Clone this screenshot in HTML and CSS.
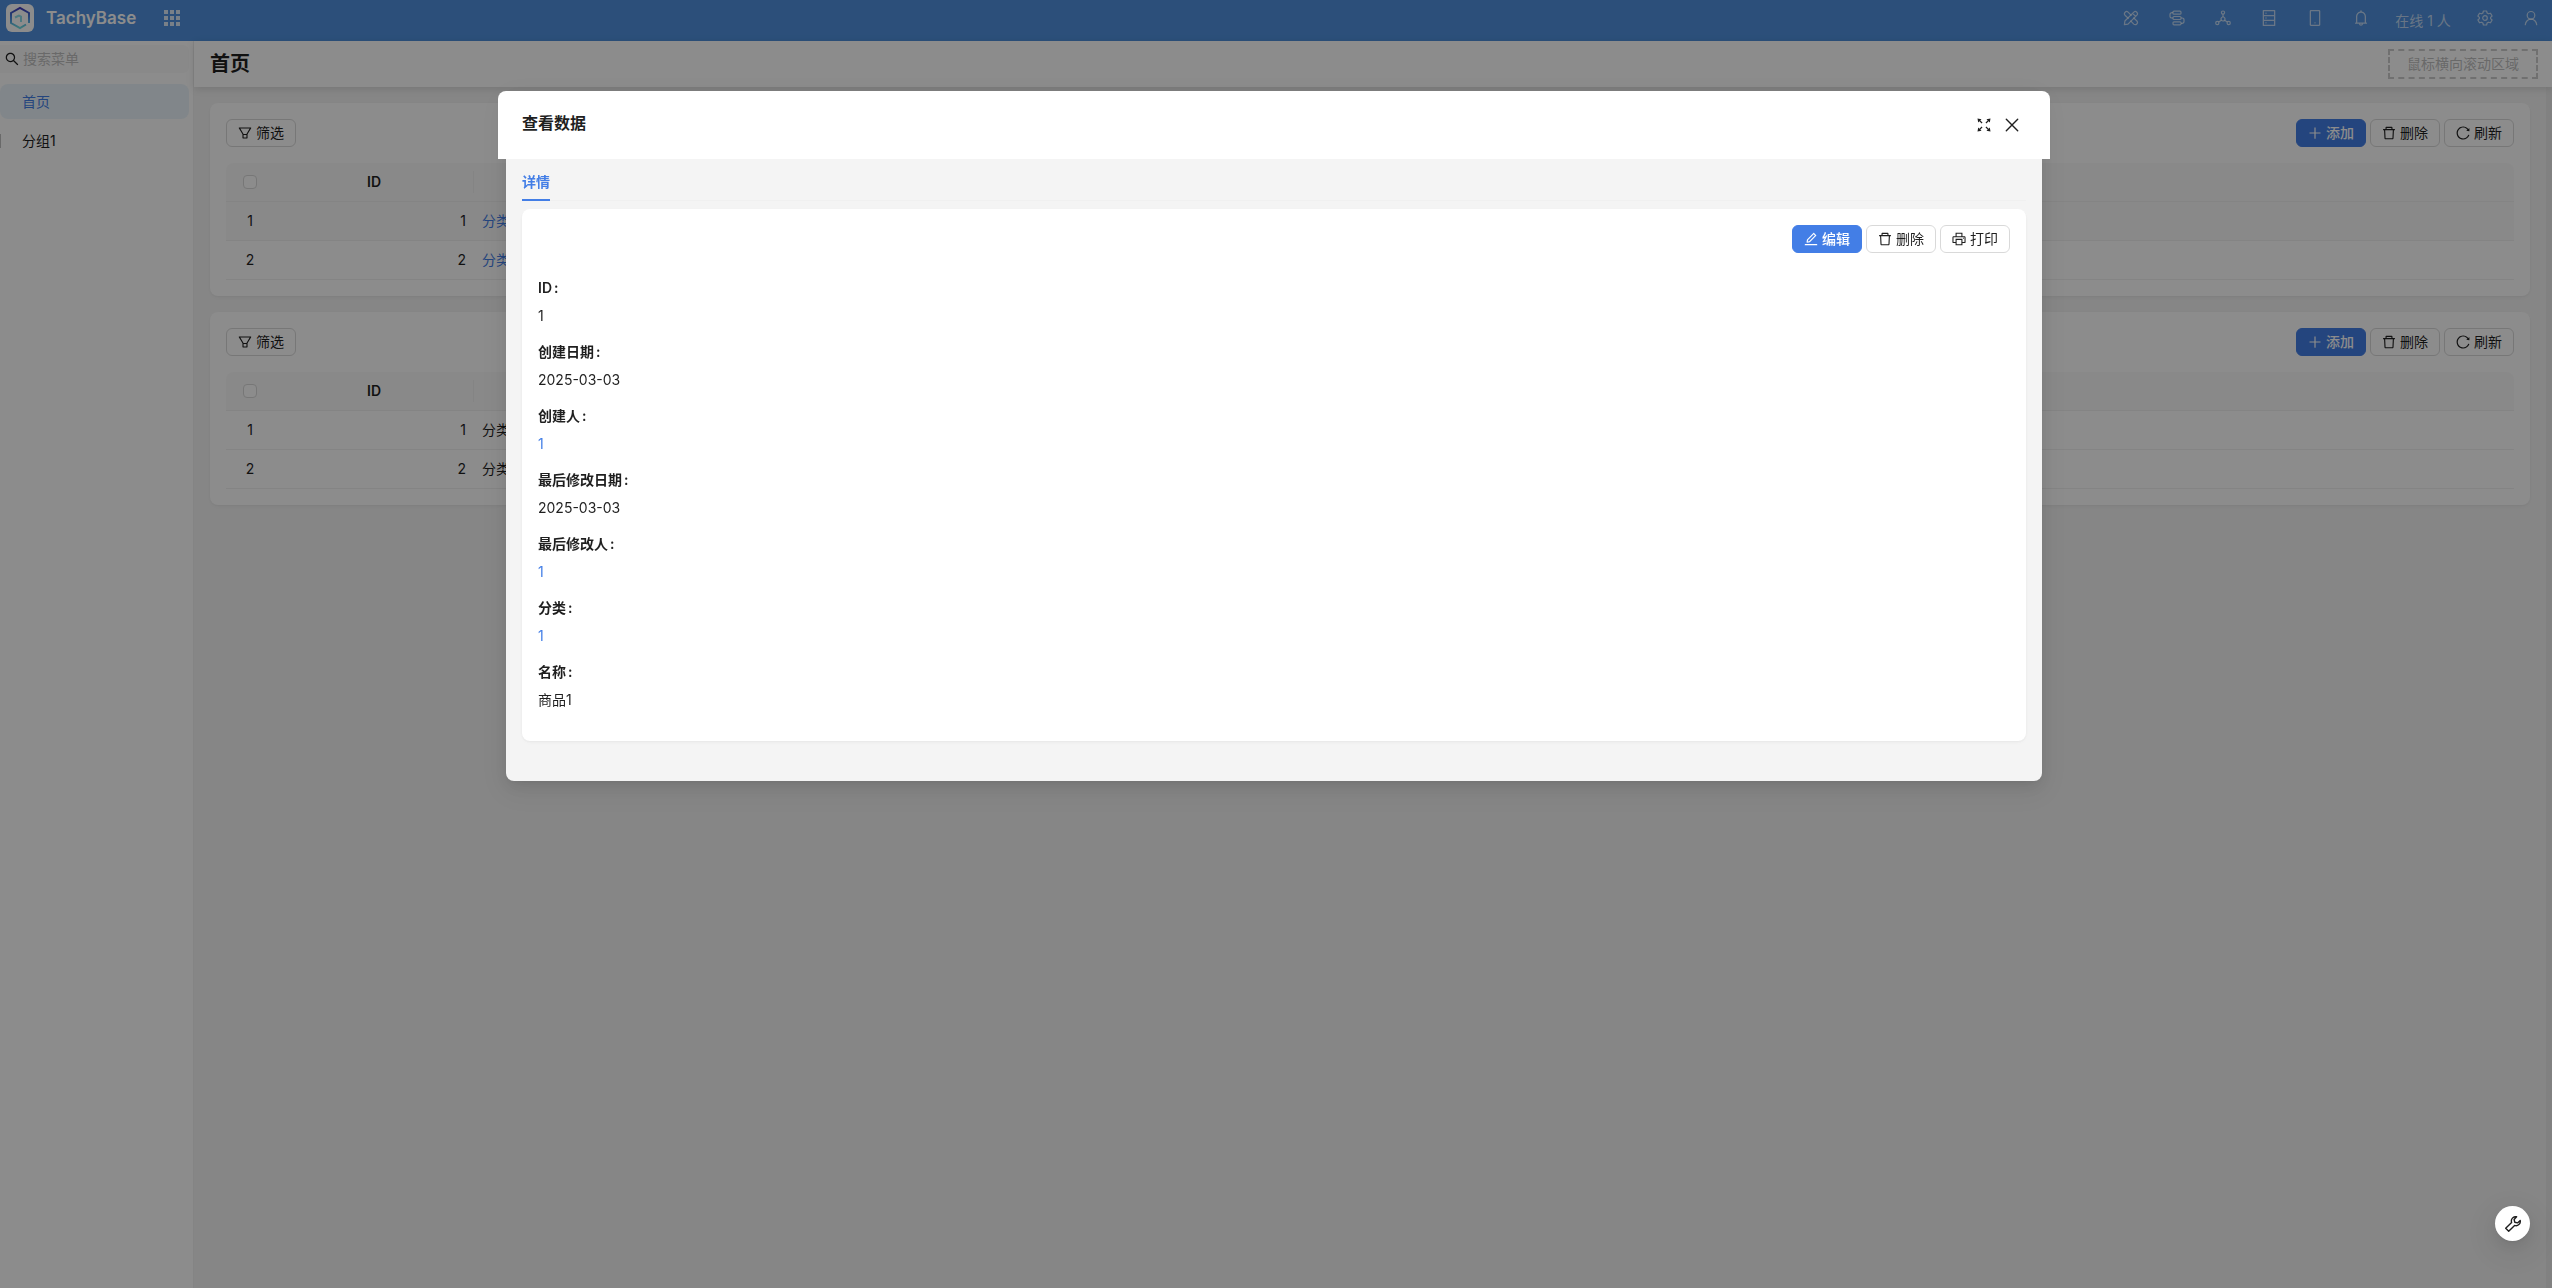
FILE: index.html
```html
<!DOCTYPE html>
<html lang="zh-CN">
<head>
    <meta charset="UTF-8">
    <meta name="viewport" content="width=device-width, initial-scale=1.0">
    <title>TachyBase - 首页</title>
    <link rel="stylesheet" href="styles.css">
</head>
<body>
    <!-- Icônes partagées -->
    <svg class="sprite" aria-hidden="true">
        <symbol id="i-plus" viewBox="64 64 896 896"><path d="M482 152h60q8 0 8 8v704q0 8-8 8h-60q-8 0-8-8V160q0-8 8-8z"/><path d="M168 474h688q8 0 8 8v60q0 8-8 8H168q-8 0-8-8v-60q0-8 8-8z"/></symbol>
        <symbol id="i-delete" viewBox="64 64 896 896"><path d="M360 184h-8c4.4 0 8-3.6 8-8v8h304v-8c0 4.4 3.6 8 8 8h-8v72h72v-80c0-35.3-28.7-64-64-64H352c-35.3 0-64 28.7-64 64v80h72v-72zm504 72H160c-17.7 0-32 14.3-32 32v32c0 4.4 3.6 8 8 8h60.4l24.7 523c1.6 34.1 29.8 61 63.9 61h454c34.2 0 62.3-26.8 63.9-61l24.7-523H888c4.4 0 8-3.6 8-8v-32c0-17.7-14.3-32-32-32zM731.3 840H292.7l-24.2-512h487l-24.2 512z"/></symbol>
        <symbol id="i-filter" viewBox="64 64 896 896"><path d="M880.1 154H143.9c-24.5 0-39.8 26.7-27.5 48L349 597.4V838c0 17.7 14.2 32 31.8 32h262.4c17.6 0 31.8-14.3 31.8-32V597.4L907.7 202c12.2-21.3-3.1-48-27.6-48zM603.4 798H420.6V642h182.9v156zm9.6-236.6l-9.5 16.6h-183l-9.5-16.6L212.7 226h598.6L613 561.4z"/></symbol>
        <symbol id="i-reload" viewBox="64 64 896 896"><path d="M909.1 209.3l-56.4 44.1C775.8 155.1 656.2 92 521.9 92 290 92 102.3 279.5 102 511.5 101.7 743.7 289.8 932 521.9 932c181.3 0 335.8-115 394.6-276.1 1.5-4.2-.7-8.9-4.9-10.3l-56.7-19.5a8 8 0 00-10.1 4.8c-1.8 5-3.8 10-5.9 14.9-17.3 41-42.1 77.8-73.7 109.4A344.77 344.77 0 01655.9 829c-42.3 17.9-87.4 27-133.8 27-46.5 0-91.5-9.1-133.8-27A341.5 341.5 0 01279 755.2a342.16 342.16 0 01-73.7-109.4c-17.9-42.4-27-87.4-27-133.9s9.1-91.5 27-133.9c17.3-41 42.1-77.8 73.7-109.4 31.6-31.6 68.4-56.4 109.3-73.8 42.3-17.9 87.4-27 133.8-27 46.5 0 91.5 9.1 133.8 27a341.5 341.5 0 01109.3 73.8c9.9 9.9 19.2 20.4 27.8 31.4l-60.2 47a8 8 0 003 14.1l175.6 43c5 1.2 9.9-2.6 9.9-7.7l.8-180.9c-.1-6.6-7.8-10.3-13-6.2z"/></symbol>
        <symbol id="i-edit" viewBox="64 64 896 896"><path d="M257.7 752c2 0 4-.2 6-.5L431.9 722c2-.4 3.9-1.3 5.3-2.8l423.9-423.9a9.96 9.96 0 000-14.1L694.9 114.9c-1.9-1.9-4.4-2.9-7.1-2.9s-5.2 1-7.1 2.9L256.8 538.8c-1.5 1.5-2.4 3.3-2.8 5.3l-29.5 168.2a33.5 33.5 0 009.4 29.8c6.6 6.4 14.9 9.9 23.8 9.9zm67.4-174.4L687.8 215l73.3 73.3-362.7 362.6-88.9 15.7 15.6-89zM880 836H144c-17.7 0-32 14.3-32 32v36c0 4.4 3.6 8 8 8h784c4.4 0 8-3.6 8-8v-36c0-17.7-14.3-32-32-32z"/></symbol>
        <symbol id="i-printer" viewBox="64 64 896 896"><path d="M820 436h-40c-4.4 0-8 3.6-8 8v40c0 4.4 3.6 8 8 8h40c4.4 0 8-3.6 8-8v-40c0-4.4-3.6-8-8-8zm32-104H732V120c0-4.4-3.6-8-8-8H300c-4.4 0-8 3.6-8 8v212H172c-44.2 0-80 35.8-80 80v328c0 17.7 14.3 32 32 32h168v132c0 4.4 3.6 8 8 8h424c4.4 0 8-3.6 8-8V772h168c17.7 0 32-14.3 32-32V412c0-44.2-35.8-80-80-80zM360 180h304v152H360V180zm304 664H360V568h304v276zm200-140H732V500H292v204H160V412c0-6.6 5.4-12 12-12h680c6.6 0 12 5.4 12 12v292z"/></symbol>
        <symbol id="i-search" viewBox="64 64 896 896"><path d="M909.6 854.5L649.9 594.8C690.2 542.7 712 479 712 412c0-80.2-31.3-155.4-87.9-212.1-56.6-56.7-132-87.9-212.1-87.9s-155.5 31.3-212.1 87.9C143.2 256.5 112 331.8 112 412c0 80.1 31.3 155.5 87.9 212.1C256.5 680.8 331.8 712 412 712c67 0 130.6-21.8 182.7-62l259.7 259.6a8.2 8.2 0 0011.6 0l43.6-43.5a8.2 8.2 0 000-11.6zM570.4 570.4C528 612.7 471.8 636 412 636s-116-23.3-158.4-65.6C211.3 528 188 471.8 188 412s23.3-116.1 65.6-158.4C296 211.3 352.2 188 412 188s116.1 23.2 158.4 65.6S636 352.2 636 412s-23.3 116.1-65.6 158.4z"/></symbol>
        <symbol id="i-bell" viewBox="64 64 896 896"><path d="M816 768h-24V428c0-141.1-104.3-257.7-240-277.1V112c0-22.1-17.9-40-40-40s-40 17.9-40 40v38.9c-135.7 19.4-240 136-240 277.1v340h-24c-17.7 0-32 14.3-32 32v32c0 4.4 3.6 8 8 8h216c0 61.8 50.2 112 112 112s112-50.2 112-112h216c4.4 0 8-3.6 8-8v-32c0-17.7-14.3-32-32-32zM512 888c-26.5 0-48-21.5-48-48h96c0 26.5-21.5 48-48 48zM304 768V428c0-55.6 21.6-107.8 60.9-147.1S456.4 220 512 220c55.6 0 107.8 21.6 147.1 60.9S720 372.4 720 428v340H304z"/></symbol>
        <symbol id="i-mobile" viewBox="64 64 896 896"><path d="M744 62H280c-35.3 0-64 28.7-64 64v768c0 35.3 28.7 64 64 64h464c35.3 0 64-28.7 64-64V126c0-35.3-28.7-64-64-64zm-8 824H288V134h448v752zM472 784a40 40 0 1080 0 40 40 0 10-80 0z"/></symbol>
        <symbol id="i-database" viewBox="64 64 896 896"><path d="M832 64H192c-17.7 0-32 14.3-32 32v832c0 17.7 14.3 32 32 32h640c17.7 0 32-14.3 32-32V96c0-17.7-14.3-32-32-32zm-600 72h560v208H232V136zm560 480H232V408h560v208zm0 272H232V680h560v208zM304 240a40 40 0 1080 0 40 40 0 10-80 0zm0 272a40 40 0 1080 0 40 40 0 10-80 0zm0 272a40 40 0 1080 0 40 40 0 10-80 0z"/></symbol>
        <symbol id="i-apps" viewBox="0 0 16 16"><path d="M0 0h4v4H0zM6 0h4v4H6zM12 0h4v4h-4zM0 6h4v4H0zM6 6h4v4H6zM12 6h4v4h-4zM0 12h4v4H0zM6 12h4v4H6zM12 12h4v4h-4z"/></symbol>
        <symbol id="i-design" viewBox="0 0 16 16"><g fill="none" stroke="currentColor" stroke-width="1.2" stroke-linejoin="round"><path d="M5.6 8.6L2 5.2a2.2 2.2 0 013.1-3.1l3.4 3.5M10.4 7.6l3.5 3.4a2.2 2.2 0 01-3.1 3.1l-3.4-3.5"/><path d="M1.4 14.6l.5-3.6 8.9-8.9a2.2 2.2 0 013.1 3.1L5 14.1zM9.6 3.4l3 3"/></g></symbol>
        <symbol id="i-flow" viewBox="0 0 16 16"><g fill="none" stroke="currentColor" stroke-width="1.2"><rect x="4" y="1.2" width="8" height="3" rx="1"/><rect x="4" y="6.5" width="8" height="3" rx="1"/><rect x="4" y="11.8" width="8" height="3" rx="1"/><path d="M4 2.7H2.8A1.8 1.8 0 001 4.5v1.7A1.8 1.8 0 002.8 8H4M12 8h1.2A1.8 1.8 0 0115 9.8v1.7a1.8 1.8 0 01-1.8 1.8H12"/></g></symbol>
        <symbol id="i-nodes" viewBox="0 0 16 16"><g fill="none" stroke="currentColor" stroke-width="1.2"><circle cx="8" cy="2.6" r="1.6"/><circle cx="8" cy="9" r="2"/><circle cx="2.3" cy="13" r="1.6"/><circle cx="13.7" cy="13" r="1.6"/><path d="M8 4.2V7M6.4 10.2l-2.7 1.9M9.6 10.2l2.7 1.9"/></g></symbol>
        <symbol id="i-gear" viewBox="0 0 16 16"><g fill="none" stroke="currentColor" stroke-width="1.2" stroke-linejoin="round"><path d="M6.4 1h3.2l.5 2 1.4.8 2-.6 1.6 2.8-1.5 1.4v1.2l1.5 1.4-1.6 2.8-2-.6-1.4.8-.5 2H6.4l-.5-2-1.4-.8-2 .6L.9 10l1.5-1.4V7.4L.9 6l1.6-2.8 2 .6L5.9 3z"/><circle cx="8" cy="8" r="2.3"/></g></symbol>
        <symbol id="i-user" viewBox="0 0 16 16"><g fill="none" stroke="currentColor" stroke-width="1.2" stroke-linecap="round"><circle cx="8" cy="5.3" r="3.8"/><path d="M2.3 14.7C2.5 11.5 5 9.1 8 9.1s5.5 2.4 5.7 5.6"/></g></symbol>
        <symbol id="i-expand" viewBox="0 0 16 16"><path d="M1.5 1.5l4 .7-1.2 1.2 2.2 2.2-.9.9-2.2-2.2-1.2 1.2zM14.5 1.5l-.7 4-1.2-1.2-2.2 2.2-.9-.9 2.2-2.2-1.2-1.2zM1.5 14.5l.7-4 1.2 1.2 2.2-2.2.9.9-2.2 2.2 1.2 1.2zM14.5 14.5l-4-.7 1.2-1.2-2.2-2.2.9-.9 2.2 2.2 1.2-1.2z"/></symbol>
        <symbol id="i-close" viewBox="0 0 16 16"><path d="M2.3 2.3l11.4 11.4M13.7 2.3L2.3 13.7" fill="none" stroke="currentColor" stroke-width="1.4" stroke-linecap="round"/></symbol>
        <symbol id="i-tool" viewBox="0 0 16 16"><path d="M11.6.8a4.3 4.3 0 00-5 5.6L.7 12.3l3 3 5.9-5.9a4.3 4.3 0 005.6-5l-2.7 2.5-2.7-.7-.7-2.7z" fill="none" stroke="currentColor" stroke-width="1.4" stroke-linejoin="round"/></symbol>
    </svg>

    <header class="topbar">
        <a href="#" class="brand">
            <svg class="brand-logo" viewBox="0 0 28 28" aria-hidden="true">
                <defs>
                    <linearGradient id="logo-fill" x1="0" y1="0" x2="0" y2="1">
                        <stop offset="0" stop-color="#4038b8"/>
                        <stop offset="0.5" stop-color="#4a8ae0"/>
                        <stop offset="1" stop-color="#6fdde0"/>
                    </linearGradient>
                </defs>
                <rect width="28" height="28" rx="6" fill="#fff"/>
                <path d="M20 20.5L14 24l-9-5V9l9-5 9 5v10" fill="none" stroke="url(#logo-fill)" stroke-width="2"/>
                <path d="M9 13.5l4-2 2 1v5.500" fill="none" stroke="#8fdcec" stroke-width="2"/>
            </svg>
            TachyBase
        </a>
        <button type="button" class="apps-button" aria-label="应用"><svg class="icon-lg"><use href="#i-apps"/></svg></button>
        <nav class="topbar-tools">
            <button type="button" class="tool" aria-label="界面设计"><svg class="icon-lg"><use href="#i-design"/></svg></button>
            <button type="button" class="tool" aria-label="工作流"><svg class="icon-lg"><use href="#i-flow"/></svg></button>
            <button type="button" class="tool" aria-label="模块"><svg class="icon-lg"><use href="#i-nodes"/></svg></button>
            <button type="button" class="tool" aria-label="数据源"><svg class="icon-lg"><use href="#i-database"/></svg></button>
            <button type="button" class="tool" aria-label="移动端"><svg class="icon-lg"><use href="#i-mobile"/></svg></button>
            <button type="button" class="tool" aria-label="通知"><svg class="icon-lg"><use href="#i-bell"/></svg></button>
            <span class="online">在线 1 人</span>
            <button type="button" class="tool" aria-label="设置"><svg class="icon-lg"><use href="#i-gear"/></svg></button>
            <button type="button" class="tool" aria-label="用户"><svg class="icon-lg"><use href="#i-user"/></svg></button>
        </nav>
    </header>

    <div class="layout">
        <aside class="sidebar">
            <label class="search">
                <svg class="icon"><use href="#i-search"/></svg>
                <input type="text" class="search-input" placeholder="搜索菜单" aria-label="搜索菜单">
            </label>
            <nav class="menu">
                <a href="#" class="menu-item menu-item-active">首页</a>
                <a href="#" class="menu-item menu-item-group">分组1</a>
            </nav>
        </aside>

        <main class="main">
            <div class="page-header">
                <h1 class="page-title">首页</h1>
                <div class="scroll-zone">鼠标横向滚动区域</div>
            </div>
            <div class="page-scroll">
                <div class="page-content">
                    <section class="card">
                        <div class="actions">
                            <button type="button" class="btn btn-first"><svg class="icon"><use href="#i-filter"/></svg>筛选</button>
                            <button type="button" class="btn btn-primary"><svg class="icon"><use href="#i-plus"/></svg>添加</button>
                            <button type="button" class="btn"><svg class="icon"><use href="#i-delete"/></svg>删除</button>
                            <button type="button" class="btn"><svg class="icon"><use href="#i-reload"/></svg>刷新</button>
                        </div>
                        <table class="table">
                            <thead>
                                <tr>
                                    <th class="col-check"><input type="checkbox" class="checkbox" aria-label="全选"></th>
                                    <th class="col-id">ID</th>
                                    <th></th>
                                </tr>
                            </thead>
                            <tbody>
                                <tr class="row-hover">
                                    <td class="cell-index">1</td>
                                    <td class="cell-id">1</td>
                                    <td><a href="#" class="link">分类1</a></td>
                                </tr>
                                <tr>
                                    <td class="cell-index">2</td>
                                    <td class="cell-id">2</td>
                                    <td><a href="#" class="link">分类2</a></td>
                                </tr>
                            </tbody>
                        </table>
                    </section>

                    <section class="card">
                        <div class="actions">
                            <button type="button" class="btn btn-first"><svg class="icon"><use href="#i-filter"/></svg>筛选</button>
                            <button type="button" class="btn btn-primary"><svg class="icon"><use href="#i-plus"/></svg>添加</button>
                            <button type="button" class="btn"><svg class="icon"><use href="#i-delete"/></svg>删除</button>
                            <button type="button" class="btn"><svg class="icon"><use href="#i-reload"/></svg>刷新</button>
                        </div>
                        <table class="table">
                            <thead>
                                <tr>
                                    <th class="col-check"><input type="checkbox" class="checkbox" aria-label="全选"></th>
                                    <th class="col-id">ID</th>
                                    <th></th>
                                </tr>
                            </thead>
                            <tbody>
                                <tr>
                                    <td class="cell-index">1</td>
                                    <td class="cell-id">1</td>
                                    <td>分类1</td>
                                </tr>
                                <tr>
                                    <td class="cell-index">2</td>
                                    <td class="cell-id">2</td>
                                    <td>分类2</td>
                                </tr>
                            </tbody>
                        </table>
                    </section>
                </div>
            </div>
        </main>
    </div>

    <!-- Fenêtre de détail -->
    <div class="overlay">
        <div class="modal" role="dialog" aria-modal="true" aria-labelledby="modal-title">
            <div class="modal-header">
                <h2 class="modal-title" id="modal-title">查看数据</h2>
                <button type="button" class="modal-button" aria-label="全屏"><svg class="icon-lg"><use href="#i-expand"/></svg></button>
                <button type="button" class="modal-button" aria-label="关闭"><svg class="icon-lg"><use href="#i-close"/></svg></button>
            </div>
            <div class="modal-body">
                <div class="tabs" role="tablist">
                    <button type="button" class="tab" role="tab" aria-selected="true">详情</button>
                </div>
                <section class="card">
                    <div class="actions">
                        <button type="button" class="btn btn-primary"><svg class="icon"><use href="#i-edit"/></svg>编辑</button>
                        <button type="button" class="btn"><svg class="icon"><use href="#i-delete"/></svg>删除</button>
                        <button type="button" class="btn"><svg class="icon"><use href="#i-printer"/></svg>打印</button>
                    </div>
                    <dl class="details">
                        <div class="field">
                            <dt>ID<span class="colon">:</span></dt>
                            <dd>1</dd>
                        </div>
                        <div class="field">
                            <dt>创建日期<span class="colon">:</span></dt>
                            <dd>2025-03-03</dd>
                        </div>
                        <div class="field">
                            <dt>创建人<span class="colon">:</span></dt>
                            <dd><a href="#" class="link">1</a></dd>
                        </div>
                        <div class="field">
                            <dt>最后修改日期<span class="colon">:</span></dt>
                            <dd>2025-03-03</dd>
                        </div>
                        <div class="field">
                            <dt>最后修改人<span class="colon">:</span></dt>
                            <dd><a href="#" class="link">1</a></dd>
                        </div>
                        <div class="field">
                            <dt>分类<span class="colon">:</span></dt>
                            <dd><a href="#" class="link">1</a></dd>
                        </div>
                        <div class="field">
                            <dt>名称<span class="colon">:</span></dt>
                            <dd>商品1</dd>
                        </div>
                    </dl>
                </section>
            </div>
        </div>
    </div>

    <button type="button" class="float-button" aria-label="工具"><svg class="icon-lg"><use href="#i-tool"/></svg></button>
</body>
</html>
```
FILE: styles.css
```css
:root {
    --color-primary: #437ee6;
    --color-topbar: #5091de;
    --color-white: #ffffff;
    --color-text: #1f1f1f;
    --color-placeholder: #bfbfbf;
    --color-border: #d9d9d9;
    --color-line: #f0f0f0;
    --color-head: #fafafa;
    --color-page: #f4f4f4;
}

* {
    box-sizing: border-box;
}

body {
    margin: 0;
    height: 100vh;
    display: flex;
    flex-direction: column;
    overflow: hidden;
    font-family: Inter, "Noto Sans CJK SC", sans-serif;
    font-size: 14px;
    line-height: 22px;
    color: var(--color-text);
    background-color: var(--color-page);
}

button,
input {
    font-family: inherit;
    font-size: inherit;
    line-height: inherit;
    color: inherit;
}

button {
    cursor: pointer;
}

.sprite {
    position: absolute;
    width: 0;
    height: 0;
}

.icon {
    width: 14px;
    height: 14px;
    flex: none;
    fill: currentColor;
}

.icon-lg {
    display: block;
    width: 16px;
    height: 16px;
    flex: none;
    fill: currentColor;
}

.link {
    color: var(--color-primary);
    text-decoration: none;
}

/* Barre supérieure */
.topbar {
    display: flex;
    align-items: center;
    flex: none;
    height: 41px;
    padding: 0 0 5px 6px;
    background-color: var(--color-topbar);
    color: var(--color-white);
}

.brand {
    display: flex;
    align-items: center;
    gap: 12px;
    font-size: 17px;
    font-weight: 600;
    color: inherit;
    text-decoration: none;
}

.brand-logo {
    width: 28px;
    height: 28px;
}

.apps-button {
    margin-left: 28px;
    padding: 0;
    border: none;
    background: none;
    opacity: 0.8;
}

.topbar-tools {
    display: flex;
    align-items: center;
    margin-left: auto;
    margin-right: -2px;
    color: rgba(255, 255, 255, 0.65);
}

.tool {
    display: flex;
    justify-content: center;
    width: 46px;
    padding: 10px 0;
    border: none;
    background: none;
}

.online {
    width: 78px;
    padding-top: 6px;
    text-align: center;
    white-space: nowrap;
}

/* Menu latéral */
.layout {
    display: flex;
    flex: 1;
    min-height: 0;
}

.sidebar {
    width: 194px;
    flex: none;
    padding: 4px 4px 0 0;
    background-color: var(--color-white);
    border-right: 1px solid var(--color-line);
}

.search {
    display: flex;
    align-items: center;
    gap: 4px;
    height: 28px;
    padding-left: 5px;
    border-radius: 0 6px 6px 0;
    background-color: var(--color-head);
}

.search-input {
    flex: 1;
    min-width: 0;
    padding: 0;
    border: none;
    outline: none;
    background: none;
}

.search-input::placeholder {
    color: var(--color-placeholder);
}

.menu {
    display: flex;
    flex-direction: column;
    gap: 4px;
    margin-top: 11px;
}

.menu-item {
    padding: 7px 22px 6px;
    border-radius: 8px;
    color: inherit;
    text-decoration: none;
}

.menu-item-active {
    background-color: #ecf5fb;
    color: var(--color-primary);
}

.menu-item-group {
    background: linear-gradient(var(--color-placeholder), var(--color-placeholder)) left center / 1px 14px no-repeat;
}

/* Page */
.main {
    display: flex;
    flex-direction: column;
    flex: 1;
    min-width: 0;
}

.page-header {
    display: flex;
    align-items: center;
    justify-content: space-between;
    flex: none;
    height: 46px;
    padding: 0 14px 0 16px;
    background-color: var(--color-white);
    box-shadow: 0 2px 8px rgba(0, 0, 0, 0.12);
    z-index: 1;
}

.page-title {
    margin: 0;
    font-size: 20px;
    font-weight: 600;
}

.scroll-zone {
    padding: 2px 17px;
    border: 2px dashed #cccccc;
    color: var(--color-placeholder);
}

.page-scroll {
    flex: 1;
    min-height: 0;
    border-right: 6px solid #ececec;
}

.page-content {
    display: flex;
    flex-direction: column;
    gap: 16px;
    padding: 16px;
}

.card {
    padding: 16px;
    border-radius: 8px;
    background-color: var(--color-white);
    box-shadow: 0 1px 2px rgba(0, 0, 0, 0.03), 0 1px 6px -1px rgba(0, 0, 0, 0.02), 0 2px 4px rgba(0, 0, 0, 0.02);
}

.actions {
    display: flex;
    justify-content: flex-end;
    gap: 4px;
}

.btn {
    display: flex;
    align-items: center;
    gap: 4px;
    height: 28px;
    padding: 0 11px;
    border: 1px solid var(--color-border);
    border-radius: 6px;
    background-color: var(--color-white);
    white-space: nowrap;
}

.btn-primary {
    border-color: var(--color-primary);
    background-color: var(--color-primary);
    color: var(--color-white);
    font-weight: 500;
}

.btn-first {
    margin-right: auto;
}

.table {
    width: 100%;
    margin-top: 16px;
    border-collapse: separate;
    border-spacing: 0;
    table-layout: fixed;
}

.table th,
.table td {
    padding: 8px;
    border-bottom: 1px solid var(--color-line);
    text-align: left;
}

.table th {
    height: 39px;
    background-color: var(--color-head);
    font-weight: 600;
}

.table th:first-child {
    border-top-left-radius: 8px;
}

.table th:last-child {
    border-top-right-radius: 8px;
}

.table .col-check {
    width: 48px;
    padding: 0;
}

.table .col-id {
    width: 200px;
    text-align: center;
    background: linear-gradient(var(--color-line), var(--color-line)) right center / 1px 22px no-repeat var(--color-head);
}

.table .cell-index {
    text-align: center;
}

.table .cell-id {
    text-align: right;
}

.row-hover td {
    background-color: var(--color-head);
}

.checkbox {
    display: block;
    width: 14px;
    height: 14px;
    margin: 0 auto;
    appearance: none;
    border: 1px solid var(--color-border);
    border-radius: 4px;
    background-color: var(--color-white);
}

/* Fenêtre */
.overlay {
    position: fixed;
    inset: 0;
    z-index: 10;
    padding: 91px 4px 0 0;
    background-color: rgba(0, 0, 0, 0.45);
}

.modal {
    max-width: 1536px;
    margin: 0 auto;
    border-radius: 8px;
    background-color: var(--color-page);
    box-shadow: 0 6px 16px rgba(0, 0, 0, 0.08), 0 3px 6px -4px rgba(0, 0, 0, 0.12), 0 9px 28px 8px rgba(0, 0, 0, 0.05);
}

.modal-header {
    display: flex;
    align-items: center;
    height: 68px;
    margin: 0 -8px;
    padding: 0 24px;
    border-radius: 8px 8px 0 0;
    background-color: var(--color-white);
}

.modal-title {
    margin: 0 auto 4px 0;
    font-size: 16px;
    font-weight: 600;
}

.modal-button {
    display: flex;
    justify-content: center;
    width: 28px;
    padding: 0;
    border: none;
    background: none;
}

.modal-body {
    padding: 0 16px 40px;
}

.tabs {
    display: flex;
    height: 42px;
    margin-bottom: 8px;
    box-shadow: inset 0 -1px var(--color-line);
}

.tab {
    padding: 6px 0 0;
    border: none;
    border-bottom: 2px solid var(--color-primary);
    background: none;
    color: var(--color-primary);
    font-weight: 600;
}

.details {
    margin: 24px 0 0;
}

.field {
    margin-bottom: 14px;
}

.field dt {
    margin-bottom: 6px;
    font-weight: 600;
}

.field dd {
    margin: 0;
}

.colon {
    margin-left: 2px;
}

.float-button {
    position: fixed;
    right: 22px;
    bottom: 47px;
    z-index: 20;
    display: flex;
    align-items: center;
    justify-content: center;
    width: 35px;
    height: 35px;
    padding: 0;
    border: none;
    border-radius: 50%;
    background-color: var(--color-white);
    box-shadow: 0 6px 16px rgba(0, 0, 0, 0.08), 0 3px 6px -4px rgba(0, 0, 0, 0.12), 0 9px 28px 8px rgba(0, 0, 0, 0.05);
}
```
